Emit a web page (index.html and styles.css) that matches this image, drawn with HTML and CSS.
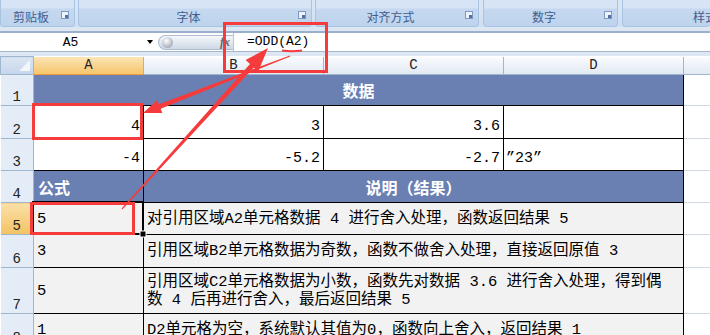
FILE: index.html
```html
<!DOCTYPE html>
<html>
<head>
<meta charset="utf-8">
<link rel="stylesheet" href="styles.css">
</head>
<body>

  <!-- ribbon group labels (bottom of the ribbon) -->
  <div class="ribbon">
    <div class="group g1"><span class="label">剪贴板</span><span class="launcher"></span></div>
    <div class="group g2"><span class="label">字体</span><span class="launcher"></span></div>
    <div class="group g3"><span class="label">对齐方式</span><span class="launcher"></span></div>
    <div class="group g4"><span class="label">数字</span><span class="launcher"></span></div>
    <div class="group g5"><span class="label">样式</span></div>
  </div>

  <div class="formula-bar">
    <div class="namebox"><span class="cellref">A5</span><span class="dropdown"></span></div>
    <div class="fxbtn"><span class="orb"></span><span class="fx">fx</span></div>
    <div class="input">=ODD(A2)</div>
  </div>

  <table class="sheet">
    <colgroup>
      <col class="c-row"><col class="c-a"><col class="c-b"><col class="c-c"><col class="c-d"><col class="c-e">
    </colgroup>
    <tr class="hdr">
      <th class="corner"><span class="tri"></span></th>
      <th class="col sel">A</th>
      <th class="col">B</th>
      <th class="col">C</th>
      <th class="col">D</th>
      <th class="col"></th>
    </tr>
    <tr class="r1">
      <th class="row">1</th>
      <td colspan="4" class="head center">数据</td>
      <td class="blank"></td>
    </tr>
    <tr class="r2">
      <th class="row">2</th>
      <td class="num">4</td>
      <td class="num">3</td>
      <td class="num">3.6</td>
      <td class="txt"></td>
      <td class="blank"></td>
    </tr>
    <tr class="r3">
      <th class="row">3</th>
      <td class="num">-4</td>
      <td class="num">-5.2</td>
      <td class="num">-2.7</td>
      <td class="txt">”23”</td>
      <td class="blank"></td>
    </tr>
    <tr class="r4">
      <th class="row">4</th>
      <td class="head">公式</td>
      <td colspan="3" class="head center">说明（结果）</td>
      <td class="blank"></td>
    </tr>
    <tr class="r5">
      <th class="row sel">5</th>
      <td class="val">5</td>
      <td colspan="3" class="desc">对引用区域A2单元格数据 4 进行舍入处理，函数返回结果 5</td>
      <td class="blank"></td>
    </tr>
    <tr class="r6">
      <th class="row">6</th>
      <td class="val">3</td>
      <td colspan="3" class="desc">引用区域B2单元格数据为奇数，函数不做舍入处理，直接返回原值 3</td>
      <td class="blank"></td>
    </tr>
    <tr class="r7">
      <th class="row">7</th>
      <td class="val">5</td>
      <td colspan="3" class="desc">引用区域C2单元格数据为小数，函数先对数据 3.6 进行舍入处理，得到偶<br>数 4 后再进行舍入，最后返回结果 5</td>
      <td class="blank"></td>
    </tr>
    <tr class="r8">
      <th class="row">8</th>
      <td class="val">1</td>
      <td colspan="3" class="desc">D2单元格为空，系统默认其值为0，函数向上舍入，返回结果 1</td>
      <td class="blank"></td>
    </tr>
  </table>

  <!-- red annotations drawn over the sheet -->
  <svg class="marks" width="710" height="335" viewBox="0 0 710 335">
    <rect x="33" y="202" width="110" height="32" fill="none" stroke="#000" stroke-width="2"/>
    <rect x="140" y="231" width="6" height="6" fill="#000" stroke="#fff" stroke-width="1"/>
    <rect x="224.5" y="23.5" width="102" height="48" fill="none" stroke="#f53b3b" stroke-width="3"/>
    <rect x="33.5" y="104.5" width="108" height="34" fill="none" stroke="#f53b3b" stroke-width="3"/>
    <rect x="31.5" y="203.5" width="102" height="30" fill="none" stroke="#f53b3b" stroke-width="3"/>
    <path d="M282 50.5 Q292 52 302 50.5" fill="none" stroke="#f53b3b" stroke-width="2"/>
    <polygon fill="#f53b3b" points="290.2,56.5 160.7,108.8 162.3,113 143,113 157.3,100 158.9,104.2 289.8,55.5"/>
    <polygon fill="#f53b3b" points="122.4,209.4 253.8,67.5 258.2,71.5 268,48 245.6,60.1 250,64.1 121.6,208.6"/>
  </svg>

</body>
</html>
```

FILE: styles.css
```css
body {
  margin: 0;
  width: 710px;
  height: 335px;
  overflow: hidden;
  position: relative;
  background-color: #dde7f3;
  font-family: "Noto Sans CJK SC", sans-serif;
}

/* Ribbon strip */
.ribbon {
  display: flex;
  gap: 3px;
  height: 27px;
  background: linear-gradient(#dbe7f5, #cedff2);
}

.group {
  display: flex;
  align-items: center;
  box-sizing: border-box;
  padding-top: 8px;
  overflow: hidden;
  white-space: nowrap;
  background: linear-gradient(#d6e4f5 0, #d6e4f5 8px, #c5d8ef 9px, #bed3ed 100%);
  border: 1px solid #a9c3e3;
  border-top: none;
  border-radius: 0 0 4px 4px;
}

.g1 { width: 75px; }
.g2 { width: 234px; }
.g3 { width: 164px; }
.g4 { width: 135px; margin-left: 1px; }
.g5 { flex: 1; margin-left: 1px; padding-left: 70px; border-right: none; }

.label {
  flex: 1;
  text-align: center;
  font-size: 12px;
  line-height: 14px;
  color: #3f5d90;
}

.g5 .label {
  flex: none;
  text-align: left;
}

.launcher {
  position: relative;
  align-self: flex-start;
  width: 6px;
  height: 6px;
  margin: 3px 5px 0 0;
  border: 1px solid #7d98c4;
  background-color: #eef3fa;
}

.launcher::after {
  content: "";
  position: absolute;
  right: 0;
  bottom: 0;
  width: 3px;
  height: 3px;
  background-color: #56709e;
}

/* Formula bar */
.formula-bar {
  display: flex;
  height: 18px;
  margin-top: 4px;
  margin-bottom: 4px;
  background-color: #fff;
  border-top: 2px solid #9aafc9;
  border-bottom: 1px solid #a6b7cc;
  font-family: "Liberation Mono", monospace;
  font-size: 13px;
}

.namebox {
  display: flex;
  align-items: center;
  width: 158px;
}

.cellref {
  flex: 1;
  text-align: center;
  padding-right: 6px;
}

.dropdown {
  width: 0;
  height: 0;
  margin-right: 5px;
  border-left: 3px solid transparent;
  border-right: 3px solid transparent;
  border-top: 4px solid #000;
}

.fxbtn {
  display: flex;
  align-items: center;
  justify-content: space-between;
  align-self: center;
  box-sizing: border-box;
  width: 75px;
  height: 15px;
  padding: 0 3px 0 3px;
  border: 1px solid #aebdd1;
  border-right: none;
  border-radius: 8px 0 0 8px;
  background: linear-gradient(#f6f8fb, #cdd8e6);
}

.orb {
  width: 11px;
  height: 11px;
  border-radius: 50%;
  background: radial-gradient(circle at 40% 35%, #fff, #b5bcc6 60%, #8d96a3);
}

.fx {
  font-family: "Liberation Serif", serif;
  font-style: italic;
  font-weight: bold;
  font-size: 12px;
  color: #6b6b6b;
}

.input {
  flex: 1;
  padding-left: 13px;
  line-height: 18px;
  border-left: 1px solid #b9c6d6;
}

/* Sheet grid */
.sheet {
  table-layout: fixed;
  border-collapse: collapse;
  width: 710px;
  background-color: #fff;
}

.c-row { width: 33px; }
.c-a { width: 110px; }
.c-b { width: 180px; }
.c-c { width: 180px; }
.c-d { width: 180px; }
.c-e { width: 27px; }

.hdr { height: 18px; }
.r1 { height: 31px; }
.r2 { height: 33px; }
.r3 { height: 32px; }
.r4 { height: 32px; }
.r5 { height: 32px; }
.r6 { height: 33px; }
.r7 { height: 46px; }
.r8 { height: 33px; }

th, td {
  padding: 0;
  overflow: hidden;
  white-space: nowrap;
}

.corner {
  position: relative;
  background: linear-gradient(#dbe6f4, #c4d5eb);
  border: 1px solid #9eb6ce;
}

.tri {
  position: absolute;
  right: 3px;
  bottom: 3px;
  width: 0;
  height: 0;
  border-left: 11px solid transparent;
  border-bottom: 11px solid #f4f6f9;
}

.col {
  font-family: "Liberation Mono", monospace;
  font-weight: normal;
  font-size: 14px;
  color: #222;
  background: linear-gradient(#fafbfd, #e2e9f2);
  border: 1px solid #9eb6ce;
  border-top: none;
}

.col.sel {
  background: linear-gradient(#fbe4b4, #f5c66c);
  border-bottom-color: #f29a3a;
}

.row {
  vertical-align: bottom;
  font-family: "Liberation Mono", monospace;
  font-weight: normal;
  font-size: 14px;
  line-height: 14px;
  color: #222;
  padding-bottom: 1px;
  background-color: #e4ecf7;
  border: 1px solid #9eb6ce;
  border-left: none;
}

.row.sel {
  background: linear-gradient(#fbe0a8, #f3c262);
  border-right-color: #f29a3a;
}

td {
  border: 1px solid #000;
  font-family: "Liberation Mono", "Noto Sans CJK SC", monospace;
  font-size: 15px;
  color: #000;
}

.blank {
  border: 1px solid #d0d7e5;
  background-color: #fff;
}

.head {
  background-color: #6a80b2;
  color: #fff;
  font-family: "Noto Sans CJK SC", sans-serif;
  font-weight: bold;
  font-size: 16px;
  padding-left: 4px;
  vertical-align: middle;
}

.center {
  text-align: center;
  padding-left: 0;
}

.num {
  text-align: right;
  vertical-align: bottom;
  padding: 0 3px 2px 0;
  line-height: 18px;
}

.txt {
  vertical-align: bottom;
  padding: 0 0 2px 2px;
  line-height: 18px;
}

.val, .desc {
  background-color: #f2f2f2;
  vertical-align: middle;
  padding-left: 3px;
  font-size: 15.5px;
  line-height: 18px;
}

/* Annotation overlay */
.marks {
  position: absolute;
  top: 0;
  left: 0;
  pointer-events: none;
}
```
